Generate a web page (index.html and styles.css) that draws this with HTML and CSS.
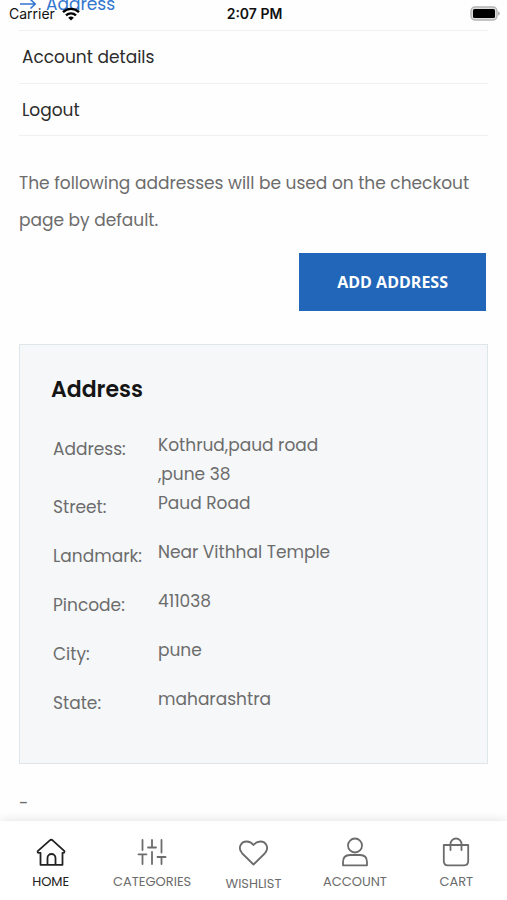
FILE: index.html
```html
<!DOCTYPE html>
<html lang="en">
<head>
<meta charset="utf-8">
<meta name="viewport" content="width=device-width, initial-scale=1">
<title>Address</title>
<link rel="stylesheet" href="styles.css">
</head>
<body>
<header class="status">
  <div class="carrier">
    <span>Carrier</span>
    <svg class="wifi" viewBox="0 0 18 14" aria-hidden="true">
      <g fill="none" stroke="#000" stroke-width="2.4">
        <path d="M1 5.2a11.4 11.4 0 0 1 16 0"/>
        <path d="M4 8.4a7.2 7.2 0 0 1 10 0"/>
      </g>
      <path d="M9 13.6 6.2 10.8a4 4 0 0 1 5.6 0z"/>
    </svg>
  </div>
  <time class="clock">2:07 PM</time>
  <svg class="battery" viewBox="0 0 31 15" aria-hidden="true">
    <rect x="2" y="1" width="26" height="13" rx="4" fill="#ddd" stroke="#b4b4b4" stroke-width="1.4"/>
    <rect x="4" y="3" width="22" height="9" rx="1.5"/>
    <path d="M29.200 5.500c2 .6 2 3.4 0 4z" fill="#a0a0a0"/>
  </svg>
</header>

<main class="content">
  <nav class="menu" aria-label="Account">
    <a class="menu-link current" href="#address">
      <svg class="arrow" viewBox="0 0 18 12" aria-hidden="true"><path d="M1 6h15M11.5 1.5 16.2 6l-4.7 4.5"/></svg>
      Address
    </a>
    <a class="menu-link" href="#details">Account details</a>
    <a class="menu-link" href="#logout">Logout</a>
  </nav>

  <p class="intro">The following addresses will be used on the checkout page by default.</p>

  <button class="add" type="button">ADD ADDRESS</button>

  <section class="card" id="address">
    <h2>Address</h2>
    <dl class="fields">
      <dt>Address:</dt><dd>Kothrud,paud road<br>,pune 38</dd>
      <dt>Street:</dt><dd>Paud Road</dd>
      <dt>Landmark:</dt><dd>Near Vithhal Temple</dd>
      <dt>Pincode:</dt><dd>411038</dd>
      <dt>City:</dt><dd>pune</dd>
      <dt>State:</dt><dd>maharashtra</dd>
    </dl>
  </section>

  <p class="dash">-</p>
</main>

<nav class="tabs" aria-label="Main">
  <a class="tab active" href="#home">
    <svg class="icon" viewBox="0 0 30 30"><path d="M4.5 15.800v12h22v-12M4.5 16 1.800 15.600q-.6-1 .2-1.800L13.800 3.300q1.400-1.200 2.800 0L28.200 13.800q.6.8 0 1.800l-1.700.4M11.500 27.500v-6.500a4 4 0 0 1 8 0v6.500"/></svg>
    <span>HOME</span>
  </a>
  <a class="tab" href="#categories">
    <svg class="icon" viewBox="0 0 30 30"><path d="M5.500 3v10M1.500 17.300h8M5.500 17.300v9.700M15 3v7.500M11 10.500h8M15 15v12M24.500 3v12.500M20.500 20h8M24.500 20v7"/></svg>
    <span>CATEGORIES</span>
  </a>
  <a class="tab wish" href="#wishlist">
    <svg class="icon" viewBox="0 0 30 30"><path d="M15.500 27.500 4.300 16.500C-.8 11 3 4.500 8.700 4.500c2.800 0 5 1.200 6.800 3.500 1.800-2.300 4-3.500 6.800-3.500 5.700 0 9.500 6.500 4.400 12z"/></svg>
    <span>WISHLIST</span>
  </a>
  <a class="tab" href="#account">
    <svg class="icon" viewBox="0 0 30 30"><circle cx="15" cy="8.500" r="7"/><path d="M3 28.300v-3.300q0-7 7-7h10q7 0 7 7v3.300z"/></svg>
    <span>ACCOUNT</span>
  </a>
  <a class="tab" href="#cart">
    <svg class="icon" viewBox="0 0 30 30"><path d="M2.800 8h24.400v16.300q0 4-4 4H6.800q-4 0-4-4zM9.500 13V7a5.500 5.500 0 0 1 11 0v6"/></svg>
    <span>CART</span>
  </a>
</nav>
</body>
</html>
```
FILE: styles.css
```css
* {
  box-sizing: border-box;
}

body {
  margin: 0;
  height: 100vh;
  display: flex;
  flex-direction: column;
  overflow: hidden;
  background: #fefefe;
  color: #6c6c6c;
  font-family: Poppins, Inter, sans-serif;
  font-size: 17px;
}

a {
  color: inherit;
  text-decoration: none;
}

.status {
  position: absolute;
  top: 0;
  left: 0;
  right: 0;
  z-index: 2;
  display: grid;
  grid-template-columns: 1fr auto 1fr;
  align-items: center;
  height: 27px;
  padding: 0 7px 0 9px;
  color: #111;
  font-family: Inter, sans-serif;
  font-size: 14px;
}

.carrier {
  display: flex;
  align-items: center;
  gap: 7px;
}

.wifi {
  width: 18px;
  height: 14px;
}

.clock {
  font-weight: 600;
}

.battery {
  width: 31px;
  height: 15px;
  justify-self: end;
}

.content {
  flex: 1;
  min-height: 0;
  overflow: hidden;
  padding: 0 19px;
}

.menu {
  margin-top: -22px;
}

.menu-link {
  display: flex;
  align-items: center;
  gap: 9px;
  height: 53px;
  padding: 0 3px;
  border-bottom: 1px solid #f0f0f0;
  color: #2c2c2c;
}

.menu-link:last-child {
  height: 52px;
}

.menu-link.current {
  padding: 0;
  color: #3276d0;
}

.arrow {
  width: 18px;
  height: 12px;
  fill: none;
  stroke: currentColor;
  stroke-width: 1.6;
}

.intro {
  margin: 29px 0 14px;
  line-height: 37px;
}

.add {
  display: block;
  height: 58px;
  margin: 0 2px 33px auto;
  padding: 0 38px;
  border: 0;
  background: #2266b9;
  color: #fff;
  font: 700 16px "Open Sans", sans-serif;
}

.card {
  padding: 28px 31px 29px;
  border: 1px solid #dfe6e9;
  background: #f5f7f9;
}

.card h2 {
  margin: 0 0 24px;
  color: #151515;
  font-size: 22px;
  font-weight: 600;
  line-height: 34px;
}

.fields {
  display: grid;
  grid-template-columns: 105px 1fr;
  grid-auto-rows: minmax(49px, auto);
  margin: 0;
  padding: 0 2px;
  line-height: 29px;
}

.fields dt {
  padding-top: 4px;
}

.fields dd {
  margin: 0;
}

.dash {
  margin: 21px 0 0;
  line-height: 36px;
}

.tabs {
  display: grid;
  grid-template-columns: repeat(5, 1fr);
  height: 79px;
  padding-top: 16px;
  background: #fff;
  box-shadow: 0 0 10px rgba(0, 0, 0, 0.12);
  font-size: 13px;
  line-height: 16px;
}

.tab {
  display: flex;
  flex-direction: column;
  align-items: center;
  gap: 7px;
}

.tab.active {
  color: #222;
}

.tab.wish {
  gap: 9px;
}

.icon {
  width: 30px;
  height: 30px;
  fill: none;
  stroke: currentColor;
  stroke-width: 1.8;
  stroke-linejoin: round;
  stroke-linecap: round;
}
```
